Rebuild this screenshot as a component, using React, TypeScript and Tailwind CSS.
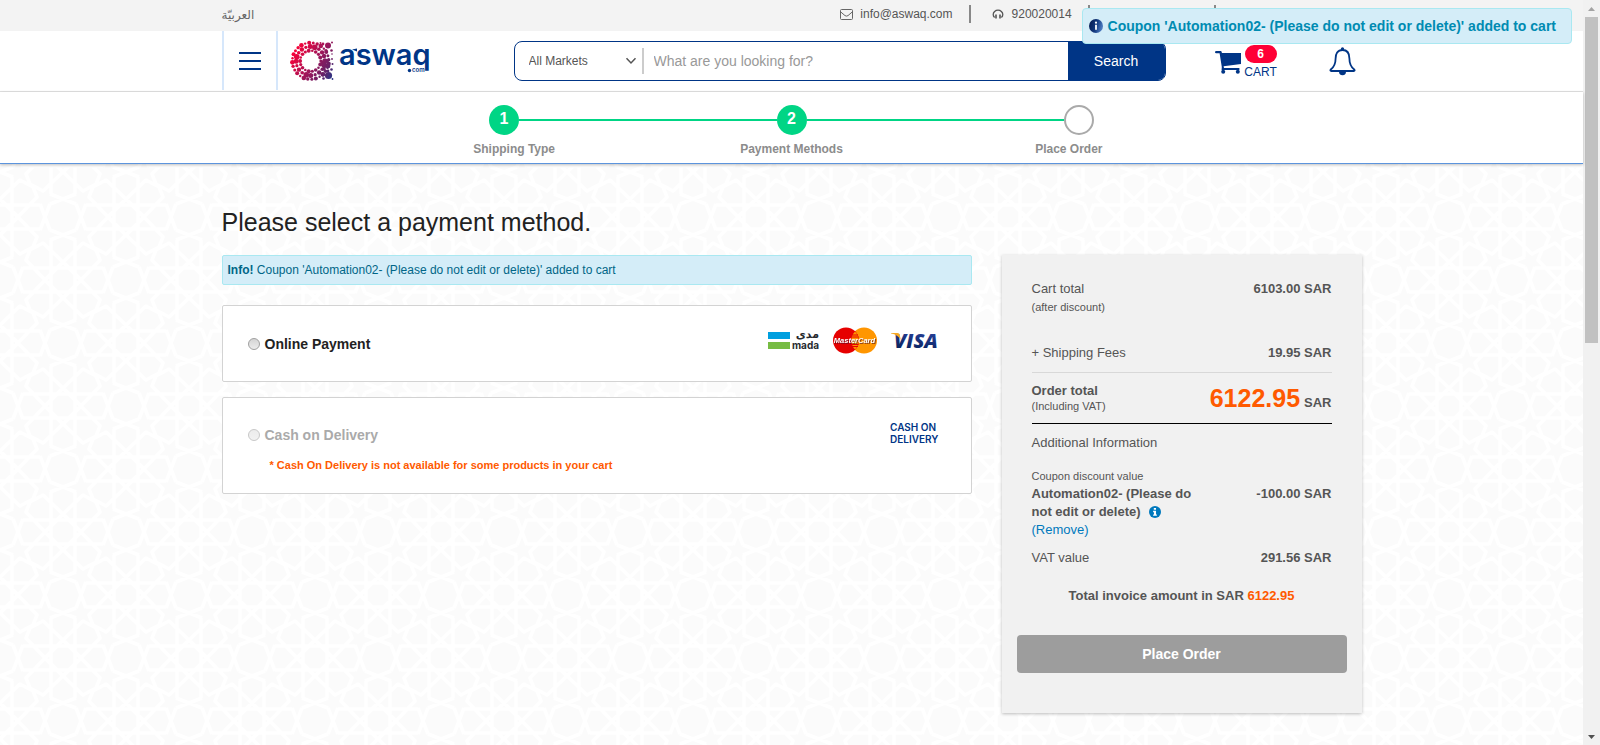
import React from "react";

const star =
  "M-40 -12H40 M-40 12H40 M-12 -40V40 M12 -40V40 " +
  "M0 -18L20 -37L33 -30L37 -20L18 0L37 20L33 30L20 37L0 18L-20 37L-33 30L-37 20L-18 0L-37 -20L-33 -30L-20 -37Z " +
  "M0 -18L18 0L0 18L-18 0Z";
const octagon =
  "M-13 -13L0 -18L13 -23 M13 -13L0 -18L-13 -23 M-13 13L0 18L13 23 M13 13L0 18L-13 23 " +
  "M-13 -13L-18 0L-23 13 M-13 13L-18 0L-23 -13 M13 -13L18 0L23 13 M13 13L18 0L23 -13";

function Pattern() {
  return (
    <svg className="absolute inset-0 h-full w-full" aria-hidden="true">
      <defs>
        <pattern id="tiles" width="126" height="126" patternUnits="userSpaceOnUse" patternTransform="translate(0 53)">
          <g fill="none" stroke="#fff" strokeWidth="3.6" strokeLinejoin="round">
            {[[0, 0], [126, 0], [0, 126], [126, 126], [63, 63]].map(([x, y]) => (
              <path key={`${x}-${y}`} d={star} transform={`translate(${x} ${y})`} />
            ))}
            {[[63, 0], [0, 63], [126, 63], [63, 126]].map(([x, y]) => (
              <path key={`${x}-${y}`} d={octagon} transform={`translate(${x} ${y})`} />
            ))}
          </g>
        </pattern>
      </defs>
      <rect width="100%" height="100%" fill="url(#tiles)" />
    </svg>
  );
}

const rings = [
  { r: 10.4, n: 18, s: [1.6, 2, 1.3, 1.8] },
  { r: 14.4, n: 20, s: [2.8, 1.8, 2.2, 1.6, 2.5] },
  { r: 18.2, n: 28, s: [1.7, 2.3, 1.2, 2, 1.5] },
];
const stem = [
  [33, 3, 1.4], [38, 4.5, 3], [30.5, 2, 1], [42, 1.5, 1], [41.5, 9.5, 1.3], [36, 9.5, 1.6], [42, 13, 0.8],
  [34, 15, 2.2], [37, 20, 2], [33, 22, 2.6], [38, 25, 2.4], [34, 28, 1.8], [41.5, 28.5, 1.3], [38, 30, 1.4],
  [33, 33.5, 2], [38.5, 34.5, 3.6], [42.5, 23, 1], [42.5, 38, 0.9], [33.5, 37.5, 1.3], [42, 18, 0.9],
];

function Logo() {
  const dots = rings.flatMap((ring, k) =>
    Array.from({ length: ring.n }, (_, i) => {
      const a = (i / ring.n) * Math.PI * 2 + k * 0.3;
      return [20.5 + ring.r * Math.cos(a), 20 + ring.r * Math.sin(a), ring.s[i % ring.s.length]];
    }),
  );
  return (
    <svg width="142" height="40" viewBox="0 0 142 40" className="overflow-visible" role="img" aria-label="aswaq.com">
      <defs>
        <linearGradient id="dots" gradientUnits="userSpaceOnUse" x1="2" y1="10" x2="42" y2="36">
          <stop offset="0" stopColor="#ff0036" />
          <stop offset="0.5" stopColor="#a31558" />
          <stop offset="0.8" stopColor="#6b2166" />
          <stop offset="1" stopColor="#2c3484" />
        </linearGradient>
      </defs>
      <g fill="url(#dots)">
        {[...dots, ...stem].map(([x, y, r], i) => (
          <circle key={i} cx={x} cy={y} r={r} />
        ))}
      </g>
      <text x="49" y="24" fontFamily="Inter, sans-serif" fontWeight="600" fontSize="29" fill="#003586">aswaq</text>
      <path d="M62 8.5L67 7.5V10.5Z" fill="#003586" />
      <circle cx="119.5" cy="29.5" r="1.7" fill="#003586" />
      <text x="122" y="31" fontFamily="Inter, sans-serif" fontSize="6" fontWeight="600" fill="#003586">com</text>
    </svg>
  );
}

function Cart() {
  return (
    <svg width="27" height="23" viewBox="0 0 27 23" fill="#003586" aria-hidden="true">
      <path d="M0 1.2Q0 0 1.2 0H6.2L7 2H26V13L8.6 15.2L9 17H24.4V19H6.6L6.8 16L4.6 2.3H1.2Q0 2.3 0 1.2Z" />
      <circle cx="8.2" cy="20.8" r="2" />
      <circle cx="22.8" cy="20.8" r="2" />
    </svg>
  );
}

function Bell() {
  return (
    <svg width="27" height="29" viewBox="0 0 27 29" fill="none" stroke="#003586" strokeWidth="1.8" strokeLinejoin="round" aria-hidden="true">
      <path d="M13.5 3C8.4 3 6.6 7 6.6 11.5C6.6 17.5 4.6 20.5 1.5 22.8Q1 23.8 2.2 24H24.8Q26 23.8 25.5 22.8C22.4 20.5 20.4 17.5 20.4 11.5C20.4 7 18.6 3 13.5 3Z" />
      <circle cx="13.5" cy="1.8" r="1.6" fill="#003586" stroke="none" />
      <path d="M10 24.5a3.5 3.8 0 0 0 7 0Z" fill="#003586" stroke="none" />
    </svg>
  );
}

function Mada() {
  return (
    <svg width="51" height="21" viewBox="0 0 51 21" className="overflow-visible" role="img" aria-label="mada">
      <rect y="2" width="22" height="7" fill="#009fdf" />
      <rect y="12" width="22" height="7" fill="#77bc43" />
      <text x="51" y="8" textAnchor="end" fontFamily="DejaVu Sans, sans-serif" fontWeight="700" fontSize="11" fill="#272a2f">مدى</text>
      <text x="51" y="19" textAnchor="end" fontFamily="Inter, sans-serif" fontWeight="700" fontSize="10" fill="#272a2f">mada</text>
    </svg>
  );
}

function MasterCard() {
  return (
    <svg width="44" height="27" viewBox="0 0 44 27" role="img" aria-label="MasterCard">
      <circle cx="31" cy="13.5" r="13" fill="#ff9600" />
      <circle cx="13" cy="13.5" r="13" fill="#e60000" />
      <path d="M22 4.5A13 13 0 0 1 22 22.5A13 13 0 0 1 22 4.5Z" fill="#ff9600" />
      <path d="M19 8H25M18.5 10H25.5M18.5 17.5H25.5M19 19.5H25" stroke="#e60000" strokeWidth="1.1" />
      <text
        x="21.5"
        y="16"
        textAnchor="middle"
        fontFamily="Liberation Sans, sans-serif"
        fontWeight="700"
        fontStyle="italic"
        fontSize="7.5"
        fill="#fff"
        className="drop-shadow-[1px_1px_0_rgba(60,10,40,0.6)]"
      >
        MasterCard
      </text>
    </svg>
  );
}

function Visa() {
  return (
    <svg width="48" height="17" viewBox="0 0 48 17" className="overflow-visible" role="img" aria-label="VISA">
      <defs>
        <linearGradient id="visa" x1="0" y1="1" x2="0.2" y2="0">
          <stop offset="0" stopColor="#001a4d" />
          <stop offset="1" stopColor="#2a44a0" />
        </linearGradient>
      </defs>
      <text x="3" y="15.5" fontFamily="Open Sans, sans-serif" fontWeight="800" fontStyle="italic" fontSize="20" fill="url(#visa)">VISA</text>
      <path d="M0 1H6.5Q8.4 1.1 8.8 3L9.8 8Q7 2.8 0 1.6Z" fill="#f7a823" />
    </svg>
  );
}

const steps = ["Shipping Type", "Payment Methods", "Place Order"];

function InfoDot() {
  return (
    <svg width="12" height="12" viewBox="0 0 14 14" aria-hidden="true">
      <circle cx="7" cy="7" r="7" fill="#0079bd" />
      <path d="M5.6 2.4h2.6v2H5.6ZM4.8 5.6h3.4v4.2h1v1.6H4.8V9.8h1V7.2h-1Z" fill="#fff" />
    </svg>
  );
}

function GlossyInfo() {
  return (
    <svg width="14" height="14" viewBox="0 0 14 14" className="shrink-0" aria-hidden="true">
      <defs>
        <linearGradient id="gloss" x1="0" y1="0" x2="1" y2="0.3">
          <stop offset="0" stopColor="#06184a" />
          <stop offset="0.6" stopColor="#12397f" />
          <stop offset="1" stopColor="#4a78bd" />
        </linearGradient>
      </defs>
      <circle cx="7" cy="7" r="7" fill="url(#gloss)" />
      <circle cx="7" cy="3.7" r="1.1" fill="#fff" />
      <path d="M6.1 5.8h1.8v5H6.1Z" fill="#fff" />
    </svg>
  );
}

const container = "mx-auto w-full max-w-[1140px]";
const radio = "h-3 w-3 shrink-0 appearance-none rounded-full border border-[#a0a0a0] bg-linear-to-b from-[#d4d4d4] to-[#ececec] disabled:border-[#c8c8c8] disabled:from-[#ececec] disabled:to-[#f2f2f2]";

export default function App() {
  return (
    <div className="relative flex min-h-screen bg-white font-['Liberation_Sans',Arial,sans-serif] text-[#555]">
      <div className="flex min-w-0 flex-1 flex-col">
        <div className="h-[31px] bg-[#f3f3f3] text-xs leading-4">
          <div className={`${container} flex`}>
            <a href="#ar" lang="ar" dir="rtl" className="mt-[7px] font-['DejaVu_Sans',sans-serif] text-xs text-[#666]">العربيّة</a>
            <div className="mt-[5px] ml-[586px] flex h-[18px] items-center">
              <svg width="13" height="11" viewBox="0 0 13 11" fill="none" stroke="#666" className="mr-[7px]" aria-hidden="true">
                <rect x="0.5" y="0.5" width="12" height="10" rx="1" />
                <path d="M0.8 3L5 6.6Q6.5 7.6 8 6.6L12.2 3" />
              </svg>
              <a href="mailto:info@aswaq.com">info@aswaq.com</a>
              <span className="ml-4 h-[18px] w-0.5 bg-[#888]" />
              <svg width="12" height="11" viewBox="0 0 12 11" fill="none" stroke="#555" className="mr-2 ml-[21px]" aria-hidden="true">
                <path d="M2.6 8.4A4.8 4.2 0 1 1 9.4 8.4" strokeWidth="1.3" />
                <path d="M4 5.4V9.4M8 5.4V9.4" strokeWidth="1.6" />
              </svg>
              <span>920020014</span>
              <span className="ml-4 h-[18px] w-0.5 bg-[#888]" />
              <span className="ml-[124px] h-[18px] w-0.5 bg-[#888]" />
            </div>
          </div>
        </div>

        <header className="h-[61px] border-b border-[#e3e3e3] bg-white">
          <div className={`${container} flex`}>
            <button aria-label="Menu" className="flex h-[59px] w-14 flex-col items-center justify-center gap-1.5 border-x-2 border-[#d6e7fb]">
              <span className="h-0.5 w-[22px] bg-[#003586]" />
              <span className="h-0.5 w-[22px] bg-[#003586]" />
              <span className="h-0.5 w-[22px] bg-[#003586]" />
            </button>
            <a href="#home" className="mt-2.5 ml-3"><Logo /></a>
            <form className="mt-2.5 ml-[82px] flex h-10 w-[652px] overflow-hidden rounded-lg border border-[#003586] bg-white" onSubmit={(e) => e.preventDefault()}>
              <div className="flex w-[122px] items-center">
                <select aria-label="Market" className="w-[110px] appearance-none bg-transparent pl-3.5 text-xs text-[#555]">
                  <option>All Markets</option>
                </select>
                <svg width="12" height="8" viewBox="0 0 12 8" fill="none" stroke="#555" strokeWidth="1.5" aria-hidden="true">
                  <path d="M1.5 1.2L6 6L10.5 1.2" />
                </svg>
              </div>
              <span className="mt-1.5 ml-[5px] h-[26px] w-0.5 bg-[#ccc]" />
              <input aria-label="Search" placeholder="What are you looking for?" className="min-w-0 flex-1 px-2.5 text-sm outline-none placeholder:text-[#999]" />
              <button className="w-[97px] bg-[#003586] text-sm text-white">Search</button>
            </form>
            <a href="#cart" className="mt-3.5 ml-[49px] flex">
              <span className="mt-1.5"><Cart /></span>
              <span className="ml-[3px] flex w-8 flex-col items-center">
                <span className="h-[18px] w-8 rounded-full bg-[#ff0036] text-center text-xs leading-[18px] font-bold text-white">6</span>
                <span className="text-xs leading-[18px] text-[#003586]">CART</span>
              </span>
            </a>
            <button aria-label="Notifications" className="mt-4 ml-[52px] h-[29px]"><Bell /></button>
          </div>
        </header>

        <nav aria-label="Checkout steps" className="relative z-10 h-[72px] border-b border-[#5c94dd] bg-white pt-[13px] shadow-[0_1px_3px_rgba(0,0,0,0.25)]">
          <div className="mx-auto flex w-[605px] items-center text-base font-bold text-white">
            <span className="flex h-[30px] w-[30px] items-center justify-center rounded-full bg-[#00d585] pb-0.5">1</span>
            <span className="h-0.5 flex-1 bg-[#00d585]" />
            <span className="flex h-[30px] w-[30px] items-center justify-center rounded-full bg-[#00d585] pb-0.5">2</span>
            <span className="h-0.5 flex-1 bg-[#00d585]" />
            <span className="h-[30px] w-[30px] rounded-full border-2 border-[#aaa]" />
          </div>
          <ol className="mx-auto mt-1.5 grid w-[832px] grid-cols-3 text-center text-xs leading-4 font-bold text-[#8c8c8c]">
            {steps.map((s) => <li key={s}>{s}</li>)}
          </ol>
        </nav>

        <main className="relative flex-1 bg-[#fbfbfb] pb-8">
          <Pattern />
          <div className={`${container} relative pt-11`}>
            <h1 className="text-[25px] leading-7 text-[#222]">Please select a payment method.</h1>
            <div className="mt-[19px] flex items-start justify-between">
              <section className="w-[750px]">
                <p role="status" className="h-[30px] rounded-xs border border-[#a9e8f1] bg-[#d4edf8] px-[5px] text-xs leading-7 text-[#006687]">
                  <b>Info!</b> Coupon 'Automation02- (Please do not edit or delete)' added to cart
                </p>
                <div className="mt-5 flex h-[77px] justify-between rounded-xs border border-[#d3d3d3] bg-white pr-8 pl-[25px]">
                  <label className="flex items-center gap-[5px] text-sm font-bold text-[#222]">
                    <input type="radio" name="method" className={radio} />
                    Online Payment
                  </label>
                  <div className="mt-5 flex h-7 items-center gap-3.5">
                    <Mada />
                    <MasterCard />
                    <Visa />
                  </div>
                </div>
                <div className="mt-[15px] h-[97px] rounded-xs border border-[#d3d3d3] bg-white pr-8 pl-[25px]">
                  <div className="flex items-start justify-between pt-[23px]">
                    <label className="mt-0.5 flex h-6 items-center gap-[5px] text-sm font-bold text-[#aaa]">
                      <input type="radio" name="method" disabled className={radio} />
                      Cash on Delivery
                    </label>
                    <span className="font-['Inter',sans-serif] text-[10px] leading-3 font-semibold text-[#003586]">CASH ON<br />DELIVERY</span>
                  </div>
                  <p className="mt-2.5 pl-[22px] text-[11px] leading-4 font-bold text-[#ff5a00]">* Cash On Delivery is not available for some products in your cart</p>
                </div>
              </section>

              <aside className="h-[458px] w-[360px] bg-[#f1f1f1] px-[15px] pt-[25px] text-[13px] leading-[18px] shadow-[0_1px_3px_rgba(0,0,0,0.25)]">
                <div className="px-[15px]">
                  <div className="flex justify-between">
                    <span>Cart total<br /><small className="text-[11px]">(after discount)</small></span>
                    <b>6103.00 SAR</b>
                  </div>
                  <div className="mt-7 flex justify-between border-b border-[#d8d8d8] pb-2.5">
                    <span>+ Shipping Fees</span>
                    <b>19.95 SAR</b>
                  </div>
                  <div className="flex justify-between border-b border-black pt-2.5 pb-2">
                    <span className="flex flex-col leading-4"><b>Order total</b><small className="text-[11px] leading-[15px]">(Including VAT)</small></span>
                    <b className="flex h-8 items-baseline gap-1 leading-[30px]"><span className="text-[25px] text-[#ff5a00]">6122.95</span> SAR</b>
                  </div>
                  <p className="mt-2.5">Additional Information</p>
                  <p className="mt-4 text-[11px] leading-4">Coupon discount value</p>
                  <div className="mt-px flex justify-between">
                    <span className="w-[170px]">
                      <b>Automation02- (Please do not edit or delete)</b>
                      <span className="ml-2 inline-block align-[-2px]"><InfoDot /></span>
                      <br />
                      <a href="#remove" className="text-[#0079bd]">(Remove)</a>
                    </span>
                    <b>-100.00 SAR</b>
                  </div>
                  <div className="mt-2.5 flex justify-between">
                    <span>VAT value</span>
                    <b>291.56 SAR</b>
                  </div>
                  <p className="mt-5 text-center font-bold">Total invoice amount in SAR <span className="text-[#ff5a00]">6122.95</span></p>
                </div>
                <button disabled className="mt-[30px] h-[38px] w-full rounded-sm bg-[#9d9d9d] text-sm font-bold text-white">Place Order</button>
              </aside>
            </div>
          </div>
        </main>
      </div>

      <div role="status" className="absolute top-2 right-7 z-20 flex h-9 items-center gap-[5px] rounded-sm border border-[#a9e8f1] bg-[#d4edf8] pr-[15px] pl-1.5 text-sm font-bold text-[#008bb2]">
        <GlossyInfo />
        Coupon 'Automation02- (Please do not edit or delete)' added to cart
      </div>

      <div className="sticky top-0 flex h-screen w-[17px] flex-col items-center justify-between bg-[#f1f1f1]" aria-hidden="true">
        <div className="flex flex-col items-center">
          <svg width="17" height="17" viewBox="0 0 17 17"><path d="M5 11L8.5 7L12 11Z" fill="#a3a3a3" /></svg>
          <div className="h-[326px] w-[13px] bg-[#c1c1c1]" />
        </div>
        <svg width="17" height="17" viewBox="0 0 17 17"><path d="M5 7L8.5 11L12 7Z" fill="#505050" /></svg>
      </div>
    </div>
  );
}
